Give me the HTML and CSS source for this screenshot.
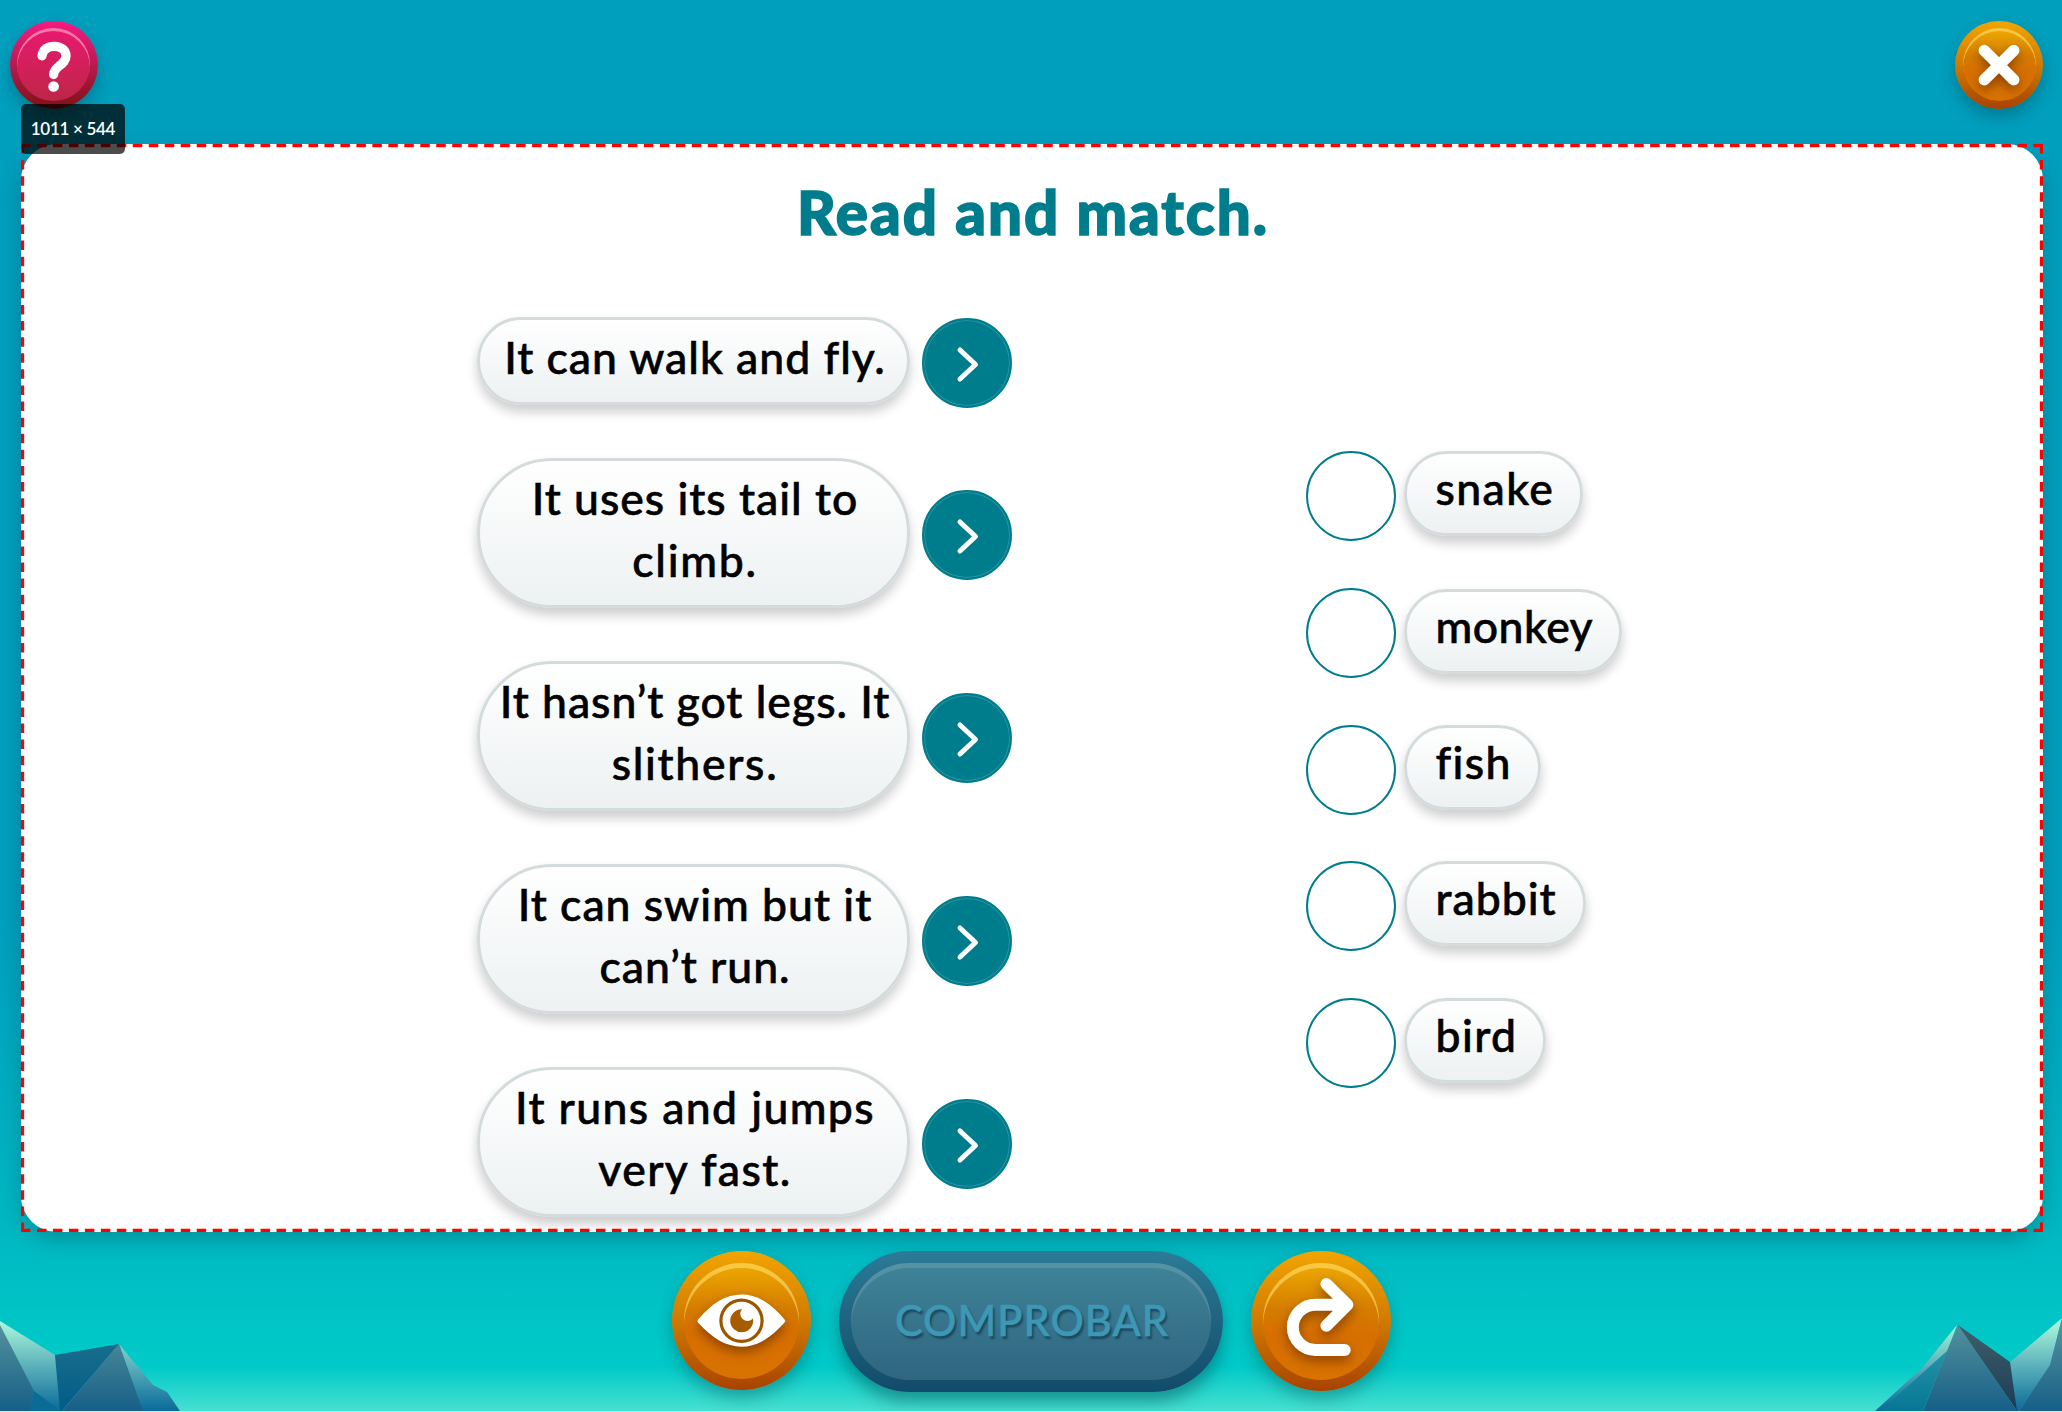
FILE: index.html
```html
<!DOCTYPE html>
<html lang="es">
<head>
<meta charset="utf-8">
<title>Read and match</title>
<link rel="stylesheet" href="styles.css">
</head>
<body>
<div class="stage">
  <svg class="rocks rocks-left" width="240" height="212" viewBox="0 0 240 212" aria-hidden="true">
    <defs>
      <linearGradient id="light" gradientUnits="userSpaceOnUse" x1="0" y1="120" x2="0" y2="211"><stop offset="0" stop-color="#aefadc"/><stop offset="1" stop-color="#0a6a9a"/></linearGradient>
      <linearGradient id="slate" gradientUnits="userSpaceOnUse" x1="0" y1="125" x2="0" y2="211"><stop offset="0" stop-color="#53919c"/><stop offset="1" stop-color="#175f88"/></linearGradient>
      <linearGradient id="dark" gradientUnits="userSpaceOnUse" x1="0" y1="125" x2="0" y2="211"><stop offset="0" stop-color="#40606a"/><stop offset="1" stop-color="#1b3b55"/></linearGradient>
      <linearGradient id="teal" gradientUnits="userSpaceOnUse" x1="0" y1="150" x2="0" y2="211"><stop offset="0" stop-color="#2792a6"/><stop offset="1" stop-color="#057796"/></linearGradient>
      <linearGradient id="deep" gradientUnits="userSpaceOnUse" x1="0" y1="145" x2="0" y2="211"><stop offset="0" stop-color="#196d8c"/><stop offset="1" stop-color="#005c88"/></linearGradient>
    </defs>
    <path fill="url(#light)" d="M0 121L55 155L61 211H0Z"/>
    <path fill="url(#slate)" d="M0 125L34 191L30 211H0Z"/>
    <path fill="#0a6c96" d="M34 191L61 211H30Z"/>
    <path fill="url(#deep)" d="M55 155L119 144L62 211H60Z"/>
    <path fill="url(#light)" d="M119 144L153 185L167 192L180 211H142Z"/>
    <path fill="url(#slate)" d="M119 144L143 211H62Z"/>
  </svg>
  <svg class="rocks rocks-right" width="240" height="212" viewBox="0 0 240 212" aria-hidden="true">
    <path fill="url(#light)" d="M135 125L125 152L62 211H53L100 168Z"/>
    <path fill="url(#teal)" d="M125 151L101 211H58Z"/>
    <path fill="url(#light)" d="M240 118L228 166L197 211H194L188 162Z"/>
    <path fill="url(#slate)" d="M136 125L195 211H101L125 151Z"/>
    <path fill="url(#dark)" d="M136 125L188 162L195 211Z"/>
    <path fill="url(#slate)" d="M240 118V211H197L228 165Z"/>
  </svg>

  <header class="top">
    <button class="round small pink" aria-label="Ayuda">
      <svg width="88" height="88" viewBox="0 0 88 88"><path d="M32 34.8C33 28 38 25.3 44 25.3C51.500 25.300 56 29.500 56 35C56 44 43.6 45 43.6 53.5" fill="none" stroke="#fff" stroke-width="9.3" stroke-linecap="round"/><circle cx="43.6" cy="65.5" r="5.3" fill="#fff"/></svg>
    </button>
    <button class="round small orange" aria-label="Cerrar">
      <svg class="lift" width="88" height="88" viewBox="0 0 88 88"><path d="M29.300 29.500L58.700 58.800M58.700 29.500L29.300 58.800" stroke="#fff" stroke-width="11.5" stroke-linecap="round"/></svg>
    </button>
  </header>

  <main class="panel">
    <h1>Read and match.</h1>
    <div class="columns">
      <div class="sentences">
        <div class="sentence"><div class="pill"><span class="tight">It can walk and fly.</span></div><div class="arrow"><svg width="90" height="90"><path d="M38 32L53.500 46.500L38 61"/></svg></div></div>
        <div class="sentence"><div class="pill"><span class="tight">It uses its tail to</span><span class="wide">climb.</span></div><div class="arrow"><svg width="90" height="90"><path d="M38 32L53.500 46.500L38 61"/></svg></div></div>
        <div class="sentence"><div class="pill"><span class="tight">It hasn’t got legs. It</span><span class="wide">slithers.</span></div><div class="arrow"><svg width="90" height="90"><path d="M38 32L53.500 46.500L38 61"/></svg></div></div>
        <div class="sentence"><div class="pill"><span class="tight">It can swim but it</span><span class="tight">can’t run.</span></div><div class="arrow"><svg width="90" height="90"><path d="M38 32L53.500 46.500L38 61"/></svg></div></div>
        <div class="sentence"><div class="pill"><span>It runs and jumps</span><span>very fast.</span></div><div class="arrow"><svg width="90" height="90"><path d="M38 32L53.500 46.500L38 61"/></svg></div></div>
      </div>
      <div class="words">
        <div class="word"><i class="slot"></i><div class="pill"><span>snake</span></div></div>
        <div class="word"><i class="slot"></i><div class="pill low"><span class="snug">monkey</span></div></div>
        <div class="word"><i class="slot"></i><div class="pill"><span>fish</span></div></div>
        <div class="word"><i class="slot"></i><div class="pill"><span class="tight">rabbit</span></div></div>
        <div class="word"><i class="slot"></i><div class="pill"><span>bird</span></div></div>
      </div>
    </div>
    <svg class="outline" width="2022" height="1088" aria-hidden="true">
      <g stroke="#f00" stroke-width="3.3">
        <path d="M0 1.500H2022M0 1086.400H2022" stroke-dasharray="9.5 6.472"/>
        <path d="M1.500 0V1088M2020.500 0V1088" stroke-dasharray="9.5 6.597"/>
      </g>
    </svg>
    <div class="size-tag">1011 × 544</div>
  </main>

  <footer class="actions">
    <button class="round orange eye" aria-label="Ver solución">
      <svg class="lift" width="139" height="139" viewBox="0 0 139 139">
        <path fill="#fff" d="M26 68.500C40 52 54 43.500 69.500 43.500S99 52 112.500 68.500Q114 70 112.500 71.500C99 87 85 95.700 69.500 95.700S40 87 26 71.500Q25 70 26 68.500Z"/>
        <circle cx="69.500" cy="69.700" r="20.600" fill="none" stroke="#9b5600" stroke-width="3.200"/>
        <path fill="#a65d00" d="M70 58.200A11.500 11.500 0 1 0 81 67.500A6.500 6.500 0 0 1 70 58.200Z"/>
      </svg>
    </button>
    <button class="check" disabled><span>COMPROBAR</span></button>
    <button class="round orange redo" aria-label="Reiniciar">
      <svg class="lift" width="140" height="140" viewBox="0 0 140 140"><path d="M93.700 99H64.500A22.650 22.650 0 0 1 64.500 53.700H94M75.400 33L96.400 53.700L75.400 74.700" fill="none" stroke="#fff" stroke-width="12" stroke-linecap="round" stroke-linejoin="round"/></svg>
    </button>
  </footer>
</div>
</body>
</html>
```
FILE: styles.css
```css
* { box-sizing: border-box; }

body {
  margin: 0;
  font-family: Lato, "Open Sans", sans-serif;
}

.stage {
  position: relative;
  width: 2062px;
  height: 1412px;
  overflow: hidden;
  border-bottom: 1px solid #c4eef2;
  background: linear-gradient(#009fbe 920px, #00b8c2 1232px, #00c9c8 1350px, #00c9c8 1366px, #45dfd0 1410px);
}

.rocks { position: absolute; bottom: -1px; }
.rocks-left { left: 0; }
.rocks-right { right: 0; }

button {
  display: grid;
  place-items: center;
  flex: none;
  padding: 0;
  border: 0;
  font-family: inherit;
}

.top {
  display: flex;
  justify-content: space-between;
  height: 144px;
  padding: 20.5px 19px 0 9.5px;
}

.round {
  position: relative;
  border-radius: 50%;
  width: 140px;
  height: 140px;
  box-shadow: 0 8px 16px rgba(0, 40, 50, .3);
}
.round::before {
  content: "";
  position: absolute;
  inset: 11.7px;
  border-radius: 50%;
}
.round svg { position: relative; display: block; }
.lift { filter: drop-shadow(0 5px 6px rgba(80, 30, 0, .55)); }
.small { width: 88px; height: 88px; }
.small::before { inset: 7.5px; }

.orange { background: linear-gradient(#f2a500, #d07a00 50%, #a84300); }
.orange::before {
  background: linear-gradient(#eeab00, #d57c00 40%, #d76f00 60%, #d87200);
  box-shadow: inset 0 5px 0 rgba(255, 222, 110, .6);
}
.pink { background: linear-gradient(#f61a82, #b91a50 50%, #7c1212); }
.pink::before {
  background: linear-gradient(#ea1870, #bd2647);
  box-shadow: inset 0 3px 0 rgba(255, 170, 200, .65);
}
.small.orange::before { box-shadow: inset 0 3px 0 rgba(255, 222, 110, .6); }

.panel {
  position: relative;
  width: 2022px;
  height: 1088px;
  margin-left: 21px;
  padding-top: 34px;
  border-radius: 36px;
  background: #fff;
  box-shadow: 0 8px 20px rgba(0, 50, 60, .28);
}
.outline { position: absolute; left: 0; top: 0; }
.size-tag {
  position: absolute;
  left: 0;
  top: -40px;
  width: 104px;
  height: 50px;
  border-radius: 5px;
  background: rgba(0, 0, 0, .7);
  color: #fff;
  font-size: 17px;
  font-weight: 600;
  letter-spacing: -.3px;
  line-height: 49px;
  text-align: center;
}

h1 {
  margin: 0;
  height: 139px;
  padding-left: 2px;
  color: #007d8c;
  font-size: 60px;
  font-weight: 900;
  letter-spacing: 2px;
  line-height: 69px;
  text-align: center;
  -webkit-text-stroke: 1.6px #007d8c;
}

.columns { display: flex; }
.sentences {
  display: flex;
  flex-direction: column;
  gap: 53px;
  margin-left: 456px;
}
.sentence { display: flex; align-items: center; gap: 11.5px; height: 150px; }
.sentence:first-child { height: 88px; }

.pill {
  border: 3px solid #d3dbdc;
  border-radius: 76px;
  background: linear-gradient(#fff, #edf1f2) padding-box;
  box-shadow: 0 7px 12px rgba(0, 0, 0, .2);
  color: #000;
  font-size: 44.5px;
  font-weight: 500;
  line-height: 62px;
  text-align: center;
  white-space: nowrap;
  -webkit-text-stroke: .6px #000;
}
.pill span { display: block; letter-spacing: 1.4px; }
.pill .tight { letter-spacing: 1px; }
.pill .snug { letter-spacing: .5px; }
.pill .wide { letter-spacing: 1.7px; }
.sentence .pill { width: 433px; padding: 5.5px 0 14.5px 3px; }

.arrow {
  width: 90px;
  height: 90px;
  margin-top: 4px;
  border: 2px solid #007d8c;
  border-radius: 50%;
  background: #007d8c;
  box-shadow: inset 0 0 0 1px rgba(255, 255, 255, .18);
}
.arrow svg { display: block; margin: -2px; }
.arrow path { fill: none; stroke: #fff; stroke-width: 5; stroke-linecap: round; stroke-linejoin: round; }

.words {
  display: flex;
  flex-direction: column;
  gap: 46.8px;
  margin: 134px 0 0 294px;
}
.word { display: flex; align-items: flex-start; gap: 8px; height: 90px; }
.slot { width: 90px; height: 90px; border: 2px solid #007d8c; border-radius: 50%; }
.word .pill { height: 85px; padding: 3px 26px 14px 29px; }
.word .low { margin-top: 1.5px; }

.actions {
  display: flex;
  justify-content: center;
  gap: 28px;
  padding: 19.3px 0 0 1px;
}
.eye { width: 139px; height: 139px; }
.check {
  position: relative;
  width: 384px;
  height: 140.5px;
  border-radius: 71px;
  background: linear-gradient(#2b7b97, #124b69);
  box-shadow: 0 10px 16px rgba(0, 50, 60, .4);
}
.check::before {
  content: "";
  position: absolute;
  inset: 11.7px;
  border-radius: 60px;
  background: linear-gradient(#3f8499, #2f6580);
  box-shadow: inset 0 5px 0 rgba(255, 255, 255, .12);
}
.check span {
  position: relative;
  margin-top: -4px;
  padding-left: 2px;
  color: #3c98b5;
  font-size: 41.5px;
  font-weight: 500;
  letter-spacing: 1.1px;
  text-shadow: 2px 3px 2px rgba(10, 40, 60, .55);
  -webkit-text-stroke: .6px #3c98b5;
}
```
